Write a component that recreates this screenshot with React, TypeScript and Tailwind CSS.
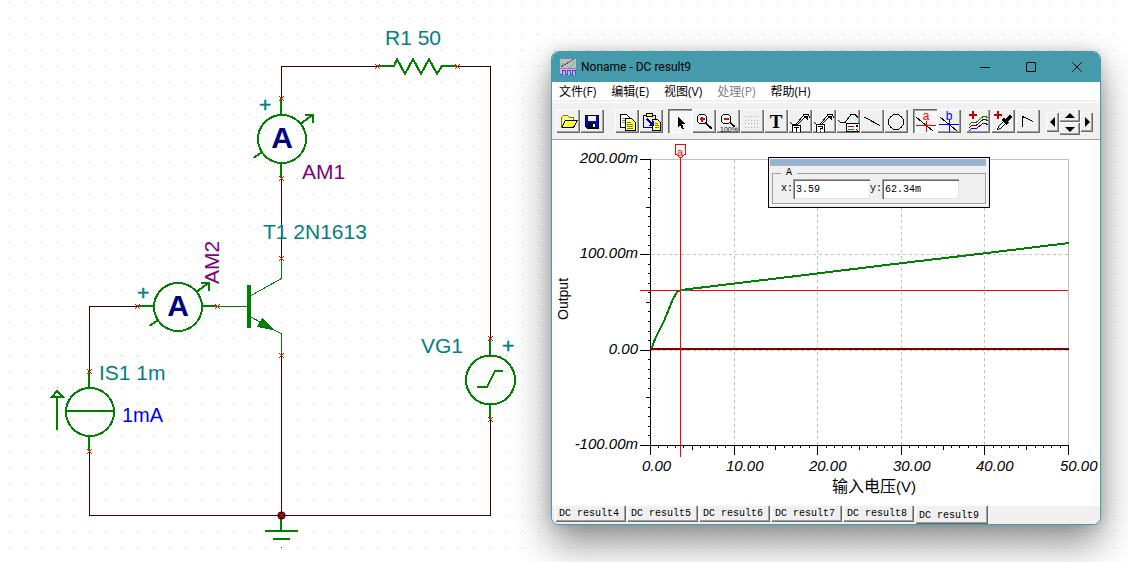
import { useState, type ReactNode } from 'react'
import clsx from 'clsx'

// 16px editor grid, the second half of each axis is rounded up by one pixel
const gridPos = (n: number, start: number, shiftAfter: number) =>
  Array.from({ length: n }, (_, i) => start + i * 16 + (start + i * 16 > shiftAfter ? 1 : 0))

const gridPath = gridPos(35, 2, 340)
  .map((y) => gridPos(70, 9, 480).map((x) => `M${x} ${y}h1v1h-1z`).join(''))
  .join('')

const pins = [
  [281, 98], [281, 178], [281, 258], [281, 355], [377, 66], [457, 66],
  [137, 306], [217, 306], [89, 371], [89, 451], [490, 338], [490, 419],
]

function Pin({ x, y }: { x: number; y: number }) {
  return (
    <path
      d={`M${x - 2} ${y - 2}h1v1h1v1h1v-1h1v-1h1v1h-1v1h-1v1h1v1h1v1h-1v-1h-1v-1h-1v1h-1v1h-1v-1h1v-1h1v-1h-1v-1h-1z`}
      fill="#f00"
    />
  )
}

function Meter({ x, y }: { x: number; y: number }) {
  return (
    <g transform={`translate(${x} ${y})`}>
      <g fill="none" stroke="#008000" strokeWidth="2" shapeRendering="crispEdges">
        <circle r="24" />
        <path d="M18.5-15L31-24.5M23-24.5H31V-16M-28.5 19L-20 13" />
      </g>
      <text y="9" textAnchor="middle" fontSize="30" fontWeight="bold" fill="#000080">A</text>
    </g>
  )
}

function Schematic() {
  return (
    <svg
      width="1128"
      height="562"
      viewBox="0 0 1128 562"
      className="block shrink-0"
      fontFamily='"Liberation Sans", Arial, sans-serif'
      fontSize="21"
    >
      <path d={gridPath} fill="#c3c3c3" shapeRendering="crispEdges" />

      {/* wires */}
      <path
        d="M281.5 98V66.5H377M457 66.5H490.5V338M281.5 178V258M281.5 355V515M137 306.5H89.5V371M89.5 451V515.5H490.5V419"
        fill="none"
        stroke="#400000"
        shapeRendering="crispEdges"
      />

      {/* resistor, source and meter leads */}
      <g fill="none" stroke="#008000" strokeWidth="2" shapeRendering="crispEdges">
        <path d="M377 66H394L397 59L405 74L413 59L421 74L429 59L437 74L442 66H457" />
        <path d="M281 98V115M281 163V178M137 306H154M202 306H217" />
        <path d="M89 371V388M89 436V451M66 411H114" />
        <circle cx="90" cy="412" r="24" />
        <path d="M57 430V398M52 397L57 391L63 397Z" />
        <path d="M490 338V356M490 404V419M477 387H487L495 371H503" />
        <circle cx="490.5" cy="380" r="24.5" />
        <path d="M281 516V531M265 531H298M273 539H290" />
      </g>

      {/* transistor */}
      <g stroke="#008000" fill="none" shapeRendering="crispEdges">
        <path d="M217 306.5H247M251 295.5L281.5 278.5V258M251 317L281.5 334V355" />
        <path d="M247 285H251V328H247ZM262 318L275 330.5L257 327Z" fill="#008000" stroke="none" />
        <path d="M281 547.5H282" />
      </g>

      <Meter x={282} y={139} />
      <Meter x={178} y={307} />

      <circle cx="281.5" cy="515.5" r="4" fill="#400000" />
      <g shapeRendering="crispEdges">
        {pins.map(([x, y]) => (
          <Pin key={`${x}-${y}`} x={x} y={y} />
        ))}
        <Pin x={281} y={515} />
      </g>

      <g fill="#008080">
        <text x="385" y="45">R1 50</text>
        <text x="263" y="239">T1 2N1613</text>
        <text x="99" y="380">IS1 1m</text>
        <text x="421" y="353">VG1</text>
        <g stroke="#008080" strokeWidth="0.5">
          <text x="259" y="112">+</text>
          <text x="137" y="300">+</text>
          <text x="502" y="353">+</text>
        </g>
      </g>
      <g fill="#800080">
        <text x="302" y="179">AM1</text>
        <text transform="translate(219 284) rotate(-90)">AM2</text>
      </g>
      <text x="122" y="422" fontSize="20" fill="#0000ff">1mA</text>
    </svg>
  )
}

const icons: Record<string, ReactNode> = {
  open: (
    <>
      <path d="M5.5 18.5V8.5L7.5 6.5H11.5L13.5 8.5H17.5V11.5" fill="#ffff80" stroke="#808000" />
      <path d="M5.5 18.5L9.5 11.5H21.5L17.5 18.5Z" fill="#ffff40" stroke="#000" />
      <path d="M5.5 8.5V18.5" stroke="#808000" />
    </>
  ),
  save: (
    <>
      <path d="M5.5 6.5H18.5V19.5H7.5L5.5 17.5Z" fill="#0000c8" stroke="#000" />
      <path d="M8 7H16V12H8Z" fill="#f0f0f0" />
      <path d="M8 14H16V19H8Z" fill="#000" />
      <path d="M13 15H15V18H13Z" fill="#fff" />
    </>
  ),
  copy: (
    <>
      <path d="M5.5 5.5H11.5L14.5 8.5V18.5H5.5Z" fill="#fff" stroke="#000" />
      <path d="M7 9.5H11M7 11.5H11M7 13.5H11" stroke="#808080" />
      <path d="M10.5 9.5H16.5L20.5 13.5V21.5H10.5Z" fill="#ffff80" stroke="#000" />
      <path d="M12 13.5H16M12 15.5H18M12 17.5H18M12 19.5H18" stroke="#808000" />
    </>
  ),
  paste: (
    <>
      <path d="M4.5 6.5H16.5V18.5H4.5Z" fill="#e6ecf5" stroke="#0000a0" />
      <path d="M7.5 4.5H13.5V7.5H7.5Z" fill="#ffff40" stroke="#000" />
      <path d="M13.5 10.5H18.5L21.5 13.5V21.5H13.5Z" fill="#ffff60" stroke="#000" />
      <path d="M16 14.5H19M16 16.5H20M16 18.5H20" stroke="#808000" />
      <path d="M8 10L13 15" stroke="#0000a0" strokeWidth="2" />
      <path d="M15 11V17H9Z" fill="#0000a0" />
    </>
  ),
  pointer: <path d="M10 8V18L12 16L14 20H16L14 15H17Z" fill="#000" />,
  zoomIn: (
    <>
      <path d="M14 14L20 20" stroke="#000" strokeWidth="2" />
      <path d="M15 14L18 17" stroke="#c0c000" />
      <circle cx="10" cy="10" r="5" fill="#fff" stroke="#000" />
      <path d="M8 10H13M10 8V13" stroke="#f00" strokeWidth="2" />
    </>
  ),
  zoomFull: (
    <>
      <path d="M14 13L19 18" stroke="#000" strokeWidth="2" />
      <path d="M15 13L18 16" stroke="#c0c000" />
      <circle cx="10" cy="10" r="5" fill="#fff" stroke="#000" />
      <path d="M8 10H13" stroke="#f00" strokeWidth="2" />
      <text x="4" y="23" fontSize="7" fill="#000">100%</text>
    </>
  ),
  grid: (
    <path
      d="M5 7.5H19M5 11.5H19M5 14.5H19M5 18.5H19"
      stroke="#b0b0b0"
      strokeDasharray="1 2"
    />
  ),
  text: (
    <text x="12" y="19" fontSize="19" fontWeight="bold" textAnchor="middle" fontFamily='"Liberation Serif", serif' fill="#000">
      T
    </text>
  ),
  curveText: (
    <>
      <path d="M2 13.5L5 15.5H8L16 5.5H20L22 8.5M9 16L18 7" fill="none" stroke="#000" />
      <path d="M15 7H20V11Z" fill="#000" />
      <path d="M4.5 22.5V16.5H12.5V22.5" fill="#fff" stroke="#000" />
      <path d="M6 18.5H11M8.5 18V23" stroke="#000" />
    </>
  ),
  curveHelp: (
    <>
      <path d="M2 13.5L5 15.5H8L16 5.5H20L22 8.5M9 16L18 7" fill="none" stroke="#000" />
      <path d="M15 7H20V11Z" fill="#000" />
      <path d="M4.5 22.5V15.5H12.5V22.5" fill="#fff" stroke="#000" />
      <path d="M6.5 18V17.5H10.5V19.5H8.5V21M8 22.5H9" fill="none" stroke="#000" />
    </>
  ),
  legend: (
    <>
      <path d="M2 11.5L5 13.5H9L15 5.5H19L22 8.5" fill="none" stroke="#000" />
      <path d="M23 14.5H10.5V22.5H23" fill="#fff" stroke="#000" />
      <path d="M12 17.5H18" stroke="#c00000" />
      <path d="M12 20.5H18" stroke="#008000" />
      <path d="M20 16L22 18M20 18L22 16M20 20L22 22" stroke="#000" />
    </>
  ),
  line: <path d="M4 8L20 16.5" stroke="#000" />,
  circle: <circle cx="12" cy="13" r="7.5" fill="none" stroke="#000" />,
  cursorA: (
    <>
      <path d="M3 8L20 22" stroke="#000" />
      <path d="M3 16.5H23M13.5 12V23" stroke="#f00" />
      <text x="13" y="11" fontSize="12" textAnchor="middle" fill="#f00">a</text>
    </>
  ),
  cursorB: (
    <>
      <path d="M3 8L20 22" stroke="#000" />
      <path d="M2 15.5H22M12.5 11V23" stroke="#00f" />
      <text x="12" y="11" fontSize="12" textAnchor="middle" fill="#00f">b</text>
    </>
  ),
  addCurve: (
    <>
      <path d="M3 15.5L6 13.5H10L17 7.5H20L22 9" fill="none" stroke="#008000" />
      <path d="M3 18.5L6 16.5H10L17 10.5H20L22 12" fill="none" stroke="#800000" />
      <path d="M3 21.5L6 19.5H10L17 14.5H20L22 16" fill="none" stroke="#00f" />
      <path d="M3 6H11M7 2V10" stroke="#c00000" strokeWidth="2" />
    </>
  ),
  probe: (
    <>
      <path d="M6.5 20.5L8 17L13 12L15 14L10 19Z" fill="#fff" stroke="#000" />
      <path d="M12 10L17 15M15 12L20 7" stroke="#000" strokeWidth="3" />
      <path d="M3 6H11M7 2V10" stroke="#c00000" strokeWidth="2" />
    </>
  ),
  play: (
    <>
      <path d="M6.5 18V7.5L17 12.5" fill="none" stroke="#000" />
      <path d="M7 18L17 13" stroke="#fff" />
    </>
  ),
}

const raised = 'bg-[#f0f0f0] shadow-[inset_1px_1px_#fff,inset_-1px_-1px_#696969,inset_-2px_-2px_#a0a0a0]'
const pressed =
  'bg-[repeating-conic-gradient(#fff_0_25%,#f0f0f0_0_50%)] bg-[length:2px_2px] shadow-[inset_1px_1px_#696969,inset_2px_2px_#a0a0a0,inset_-1px_-1px_#fff]'

function ToolButton({ name, active = false }: { name: string; active?: boolean }) {
  return (
    <button type="button" aria-label={name} className={clsx('h-6 w-6 shrink-0', active ? pressed : raised)}>
      <svg viewBox="0 0 24 24" className="block h-6 w-6" shapeRendering="crispEdges" fontFamily='"Liberation Sans", sans-serif'>
        {icons[name]}
      </svg>
    </button>
  )
}

function ArrowButton({ label, d, className }: { label: string; d: string; className: string }) {
  return (
    <button type="button" aria-label={label} className={clsx('flex items-center justify-center', raised, className)}>
      <svg viewBox="0 0 10 10" className="block h-[10px] w-[10px]">
        <path d={d} fill="#000" />
      </svg>
    </button>
  )
}

function Toolbar() {
  return (
    <div className="flex h-9 items-start border-b border-[#a0a0a0] bg-[#f0f0f0] pl-1 pt-[5px]">
      <div className="flex">
        <ToolButton name="open" />
        <ToolButton name="save" />
      </div>
      <div className="ml-[11px] flex">
        <ToolButton name="copy" />
        <ToolButton name="paste" />
      </div>
      <div className="ml-[5px] flex">
        <ToolButton name="pointer" active />
        <ToolButton name="zoomIn" />
        <ToolButton name="zoomFull" />
        <ToolButton name="grid" />
        <ToolButton name="text" />
        <ToolButton name="curveText" />
        <ToolButton name="curveHelp" />
        <ToolButton name="legend" />
        <ToolButton name="line" />
        <ToolButton name="circle" />
      </div>
      <div className="ml-[5px] flex">
        <ToolButton name="cursorA" active />
        <ToolButton name="cursorB" />
      </div>
      <div className="ml-[5px] flex gap-px">
        <ToolButton name="addCurve" />
        <ToolButton name="probe" />
        <ToolButton name="play" />
      </div>
      <div className="ml-[6px] flex items-center">
        <ArrowButton label="Left" d="M7 0V10L2 5Z" className="h-5 w-[13px]" />
        <div className="flex flex-col">
          <ArrowButton label="Up" d="M0 7H10L5 2Z" className="h-[13px] w-[21px]" />
          <ArrowButton label="Down" d="M0 3H10L5 8Z" className="h-[13px] w-[21px]" />
        </div>
        <ArrowButton label="Right" d="M3 0V10L8 5Z" className="h-5 w-[13px]" />
      </div>
    </div>
  )
}

const xTicks = [
  { x: 650, label: '0.00', textX: 642 },
  { x: 734, label: '10.00', textX: 726 },
  { x: 817, label: '20.00', textX: 809 },
  { x: 901, label: '30.00', textX: 893 },
  { x: 984, label: '40.00', textX: 976 },
  { x: 1068, label: '50.00', textX: 1060 },
]

const yTicks = [
  { y: 159, label: '200.00m' },
  { y: 254, label: '100.00m' },
  { y: 350, label: '0.00' },
  { y: 445, label: '-100.00m' },
]

const minorX = Array.from({ length: 50 }, (_, i) => {
  const len = i % 10 === 5 ? 5 : 3
  return `M${Math.round(650 + i * 8.36) + 0.5} 445v${len}`
}).join('')

const minorY = Array.from({ length: 30 }, (_, i) => {
  const len = i % 10 === 5 ? 4 : 2
  return `M650 ${Math.round(159 + i * 9.53) + 0.5}h-${len}`
}).join('')

function Chart() {
  return (
    <svg
      viewBox="552 140 548 366"
      className="block w-full"
      fontFamily='"Liberation Sans", Arial, "Noto Sans CJK SC", sans-serif'
      fontSize="15"
    >
      <g shapeRendering="crispEdges" fill="none">
        <path d="M650 159.5H1068.5V445" stroke="#c0c0c0" />
        <path
          d="M734.5 160V445M817.5 160V445M901.5 160V445M984.5 160V445M651 254.5H1068M651 350.5H1068"
          stroke="#c0c0c0"
          strokeDasharray="3 3"
        />
        <path d="M650.5 159V445.5H1069" stroke="#000" />
        <path d={minorX} stroke="#000" />
        <path d={minorY} stroke="#000" />
        {xTicks.map((t) => (
          <path key={t.x} d={`M${t.x + 0.5} 445v10`} stroke="#000" />
        ))}
        {yTicks.map((t) => (
          <path key={t.y} d={`M640 ${t.y + 0.5}h10`} stroke="#000" />
        ))}
        <path
          d="M651 350L655 339L664 321L673 299L677 292L681 290L805 275L886 265L987 253L1069 243"
          stroke="#008000"
          strokeWidth="2"
        />
        <path d="M650 349H1069" stroke="#800000" strokeWidth="2" />
        <path d="M640 290.5H1068M680.5 157V457" stroke="#f00" />
        <path d="M680 290.5H690" stroke="#0080c0" />
        <path d="M675.5 144.5H685.5V154L680.5 158L675.5 154Z" fill="#fff" stroke="#f00" />
      </g>
      <text x="680" y="156" fontSize="11" textAnchor="middle" fill="#f00">a</text>
      <g fontStyle="italic" fill="#000">
        {yTicks.map((t) => (
          <text key={t.y} x="638" y={t.y + 4} textAnchor="end">{t.label}</text>
        ))}
        {xTicks.map((t) => (
          <text key={t.x} x={t.textX} y="471">{t.label}</text>
        ))}
      </g>
      <text x="832" y="492" fontSize="16">
        输入电压<tspan fontSize="15">(V)</tspan>
      </text>
      <text transform="translate(568 320) rotate(-90)" fontSize="14">Output</text>
    </svg>
  )
}

function CursorPanel() {
  const [x, setX] = useState('3.59')
  const [y, setY] = useState('62.34m')
  const field =
    'h-5 w-[77px] bg-white pl-[3px] shadow-[inset_1px_1px_#a0a0a0,inset_2px_2px_#696969,inset_-1px_-1px_#e3e3e3] outline-none'

  return (
    <div className="absolute left-[216px] top-[17px] w-[222px] border border-black bg-[#f0f0f0] p-px font-['Liberation_Mono',monospace] text-[10px] leading-3">
      <div className="mr-0.5 h-[7px] bg-[#99b4d1]" />
      <fieldset className="mx-0.5 mb-0.5 mt-px border border-[#a0a0a0] px-2 pb-1 shadow-[1px_1px_#fff]">
        <legend className="px-[5px]">A</legend>
        <div className="flex items-center">
          <label htmlFor="cursor-x">x:</label>
          <input id="cursor-x" className={field} value={x} onChange={(e) => setX(e.target.value)} />
          <label htmlFor="cursor-y">y:</label>
          <input id="cursor-y" className={field} value={y} onChange={(e) => setY(e.target.value)} />
        </div>
      </fieldset>
    </div>
  )
}

const menus = [
  { label: '文件(F)' },
  { label: '编辑(E)' },
  { label: '视图(V)' },
  { label: '处理(P)', disabled: true },
  { label: '帮助(H)' },
]

const tabs = ['DC result4', 'DC result5', 'DC result6', 'DC result7', 'DC result8', 'DC result9']

function ResultWindow() {
  const [tab, setTab] = useState('DC result9')

  return (
    <section className="absolute left-[551px] top-[51px] w-[550px] overflow-hidden rounded-lg border border-[#459aab] bg-white font-['Open_Sans','Noto_Sans_CJK_SC',sans-serif] text-xs text-black shadow-[0_18px_38px_rgba(0,0,0,0.45),0_0_14px_rgba(0,0,0,0.14)]">
      <header className="flex h-[30px] items-center bg-[#459aab] pl-2">
        <svg viewBox="0 0 16 16" className="h-4 w-4 shrink-0" shapeRendering="crispEdges" fill="none">
          <path d="M0 0H16V16H0Z" fill="#c0c0c0" />
          <path d="M0 7L4 4L8 8H11L15 2" stroke="#40e060" />
          <path d="M1 8L14 0" stroke="#804080" />
          <path d="M0 9.5H16" stroke="#ff40ff" />
          <path d="M0 15.5H2.5V11.5H5.5V15.5H7.5V11.5H10.5V15.5H12.5V11.5H15.5V16" stroke="#4040ff" />
        </svg>
        <h1 className="ml-[5px] flex-1 font-['Roboto',sans-serif]">Noname - DC result9</h1>
        <button type="button" aria-label="Minimize" className="flex h-full w-[46px] items-center justify-center">
          <span className="h-px w-[10px] bg-black" />
        </button>
        <button type="button" aria-label="Maximize" className="flex h-full w-[46px] items-center justify-center">
          <span className="h-[10px] w-[10px] rounded-[1px] border border-black" />
        </button>
        <button type="button" aria-label="Close" className="flex h-full w-[46px] items-center justify-center">
          <svg viewBox="0 0 10 10" className="h-[10px] w-[10px]">
            <path d="M0 0L10 10M10 0L0 10" stroke="#000" />
          </svg>
        </button>
      </header>

      <nav className="flex h-[18px] items-end gap-[15px] bg-white pl-[7px]">
        {menus.map((m) => (
          <button key={m.label} type="button" disabled={m.disabled} className="leading-4 disabled:text-[#808080]">
            {m.label}
          </button>
        ))}
      </nav>
      <div className="h-[3px] border-b border-white bg-[#f0f0f0]" />
      <div className="h-px bg-[#f0f0f0]" />
      <Toolbar />

      <div className="relative">
        <Chart />
        <CursorPanel />
      </div>

      <div role="tablist" className="flex h-[18px] items-start gap-px bg-[#f0f0f0] pl-[3px] font-['Liberation_Mono',monospace] text-[10px]">
        {tabs.map((t) => (
          <button
            key={t}
            type="button"
            role="tab"
            aria-selected={t === tab}
            onClick={() => setTab(t)}
            className={clsx(
              'bg-[#f0f0f0] pl-1 text-left shadow-[inset_1px_0_#fff,inset_-1px_-1px_#696969,inset_-2px_-2px_#a0a0a0]',
              t === tab ? 'h-[18px] w-[73px] pt-0.5' : 'h-4 w-[71px]'
            )}
          >
            {t}
          </button>
        ))}
      </div>
    </section>
  )
}

export default function App() {
  return (
    <main className="relative min-h-screen w-full overflow-hidden bg-white">
      <Schematic />
      <ResultWindow />
    </main>
  )
}
